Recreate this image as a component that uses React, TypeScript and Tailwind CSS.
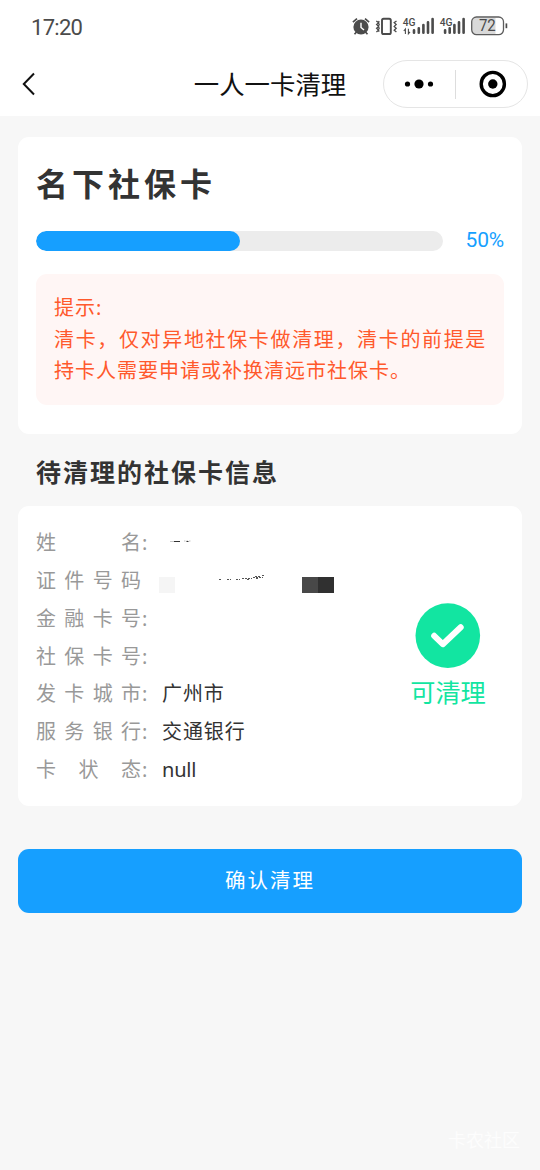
import React from "react";

const cardRows = [
  { label: ["姓", "名"], colon: true, value: "" },
  { label: ["证", "件", "号", "码"], colon: false, value: "" },
  { label: ["金", "融", "卡", "号"], colon: true, value: "" },
  { label: ["社", "保", "卡", "号"], colon: true, value: "" },
  { label: ["发", "卡", "城", "市"], colon: true, value: "广州市" },
  { label: ["服", "务", "银", "行"], colon: true, value: "交通银行" },
  { label: ["卡", "状", "态"], colon: true, value: "null" },
];

function StatusIcons() {
  return (
    <svg width="160" height="24" viewBox="350 14 160 24" fill="none" className="shrink-0">
      {/* alarm clock */}
      <circle cx="361" cy="27" r="7.6" fill="#4b4b4b" />
      <path d="M352.9 22.2 357 18.7M365 18.7l4.1 3.5M356.3 32.3l-1.8 2M365.7 32.3l1.8 2" stroke="#4b4b4b" strokeWidth="1.7" />
      <path d="M361 22.8v4.6l3 2.7" stroke="#fff" strokeWidth="1.4" />
      {/* vibration */}
      <rect x="382" y="18.8" width="8.8" height="15.2" rx="1.6" stroke="#4b4b4b" strokeWidth="1.9" />
      <path d="M376.3 21l2.3 1.6-2 1.9 2 1.9-2 1.9 2 1.9-2.2 1.8M379.2 21l-1 1.6 1 1.9-1 1.9 1 1.9-1 1.9 1 1.4M396.5 21l-2.3 1.6 2 1.9-2 1.9 2 1.9-2 1.9 2.2 1.8" stroke="#4b4b4b" strokeWidth="1.3" />
      {/* first signal */}
      <text x="402.7" y="25.6" fontSize="10.5" fontWeight="500" textLength="12.8" lengthAdjust="spacingAndGlyphs" fill="#4b4b4b" fontFamily="Roboto, sans-serif">4G</text>
      <path d="M405.4 34v-5l-1.6 2M408.4 28.8v5l1.6-2" stroke="#4b4b4b" strokeWidth="1.1" />
      <path d="M414 30.3v2.4M418.8 28.2v4.5M423.4 25v7.7M428 22.2v10.5M432.6 19v13.7" stroke="#4b4b4b" strokeWidth="2.6" strokeLinecap="round" />
      {/* second signal */}
      <text x="439.8" y="25.6" fontSize="10.5" fontWeight="500" textLength="12.8" lengthAdjust="spacingAndGlyphs" fill="#4b4b4b" fontFamily="Roboto, sans-serif">4G</text>
      <path d="M445.1 30.3v2.4M449.7 28.2v4.5M454.4 25v7.7M459 22.2v10.5M463.6 19v13.7" stroke="#4b4b4b" strokeWidth="2.6" strokeLinecap="round" />
      {/* battery */}
      <path d="M476.5 17.8h19v16.4h-19a4.5 4.5 0 0 1-4.5-4.5v-7.4a4.5 4.5 0 0 1 4.5-4.5z" fill="#d9d9d9" />
      <rect x="471.7" y="17" width="31.8" height="17.6" rx="4.8" stroke="#5c5c5c" strokeWidth="1.3" />
      <path d="M506.4 23.4v4.8" stroke="#4b4b4b" strokeWidth="1.7" />
      <text x="487.3" y="31.4" textAnchor="middle" fontSize="16" textLength="16.8" lengthAdjust="spacingAndGlyphs" fill="#4b4b4b" fontFamily="Roboto, sans-serif">72</text>
    </svg>
  );
}

function NameRemnant() {
  return (
    <svg width="30" height="6" viewBox="0 0 30 6" className="-mt-[3px] ml-[7px]">
      <path d="M1 3.5h4" stroke="#bbb" strokeWidth=".8" />
      <path d="M5 3.5h6" stroke="#333" />
      <path d="M15 3h7" stroke="#aaa" strokeWidth=".7" strokeDasharray="1.5 1" />
      <path d="M17.5 3.5h2" stroke="#333" />
    </svg>
  );
}

function IdRemnant() {
  return (
    <svg width="178" height="20" viewBox="158 573 178 20" className="-ml-1 mt-[4px]" shapeRendering="crispEdges">
      <path fill="#f5f5f5" d="M159 577h16v16h-16z" />
      <path fill="#484848" d="M302 577h16v16h-16z" />
      <path fill="#303030" d="M318 577h16v16h-16z" />
      <path d="M219 579.5h3M227 579.5h4M236 579h4M242 578.5h2M245 578.5h7M247 579.5h2M253 577.5h8M255 576.5h5M256 578.5h2M262 577.5h1M262 575.5h3" stroke="#555" strokeWidth="1" strokeDasharray="2 1" />
    </svg>
  );
}

export default function App() {
  return (
    <div className="flex h-[1170px] w-[540px] flex-col overflow-hidden bg-[#f7f7f7] font-['Noto_Sans','Noto_Sans_CJK_SC',sans-serif] text-[#333]">
      <header className="h-[116px] shrink-0 bg-white">
        <div className="flex h-[52px] items-center justify-between pl-[31px] pr-[30px]">
          <span className="pt-[3px] font-['Roboto',sans-serif] text-[22px] leading-[24px] tracking-[-0.7px] text-[#4b4b4b]">17:20</span>
          <StatusIcons />
        </div>
        <div className="grid h-16 grid-cols-[156px_228px_156px] items-center">
          <svg width="20" height="28" viewBox="0 0 20 28" className="ml-[19px]" fill="none">
            <path d="M15 3.5 4.8 14 15 24.5" stroke="#111" strokeWidth="2" />
          </svg>
          <h1 className="pb-[3px] text-center font-['Noto_Sans_CJK_SC',sans-serif] text-[25.4px] leading-[36px] text-[#111]">一人一卡清理</h1>
          <div className="-ml-px flex h-12 w-[145px] items-center rounded-full border border-[#e5e5e5]">
            <svg width="71" height="46" viewBox="0 0 71 46">
              <circle cx="23.5" cy="23" r="2.6" />
              <circle cx="35" cy="23" r="4.6" />
              <circle cx="46.5" cy="23" r="2.6" />
            </svg>
            <div className="h-[29px] w-px bg-[#ddd]" />
            <svg width="71" height="46" viewBox="0 0 71 46" fill="none">
              <circle cx="36.8" cy="23" r="11.6" stroke="#000" strokeWidth="3.4" />
              <circle cx="36.8" cy="23" r="4.7" fill="#000" />
            </svg>
          </div>
        </div>
      </header>

      <main className="flex flex-col px-[18px] pt-[21px]">
        <section className="h-[297px] rounded-[11px] bg-white px-[18px] pt-[21px]">
          <h2 className="h-12 whitespace-nowrap font-['Noto_Sans_CJK_SC',sans-serif] text-[32px] font-bold leading-[48px] tracking-[4px]">名下社保卡</h2>
          <div className="mt-[23px] flex h-6 items-center">
            <div className="h-[19.5px] w-[407px] overflow-hidden rounded-full bg-[#ececec]">
              <div className="h-full w-1/2 rounded-full bg-[#169fff]" />
            </div>
            <span className="ml-auto pb-[2px] font-['Roboto',sans-serif] text-[21px] leading-6 tracking-[-0.2px] text-[#169fff]">50%</span>
          </div>
          <div className="mt-[21px] h-[131px] rounded-[11px] bg-[#fff6f5] px-[18px] pt-[18px] text-[20px] leading-[31.5px] text-[#ff592c]">
            <p className="tracking-[1px]">提示:</p>
            <p className="whitespace-nowrap tracking-[1.65px]">清卡，仅对异地社保卡做清理，清卡的前提是</p>
            <p className="whitespace-nowrap tracking-[1px]">持卡人需要申请或补换清远市社保卡。</p>
          </div>
        </section>

        <h3 className="h-[72px] pl-[18px] font-['Noto_Sans_CJK_SC',sans-serif] text-[25px] font-bold leading-[74px] tracking-[2px]">待清理的社保卡信息</h3>

        <section className="flex h-[300px] rounded-[11px] bg-white pl-[18px] pt-[18px]">
          <div className="grow">
            {cardRows.map((row, i) => (
              <div key={i} className="flex h-[37.75px] items-center text-[20px] leading-[37px]">
                <div className="flex w-[105px] justify-between text-[#999]">
                  {row.label.map((c) => (
                    <span key={c}>{c}</span>
                  ))}
                </div>
                <span className="w-[21px] pl-[1px] text-[#999]">{row.colon ? ":" : ""}</span>
                {i === 0 && <NameRemnant />}
                {i === 1 && <IdRemnant />}
                <span className={row.value === "null" ? "tracking-[-0.2px]" : "tracking-[0.9px]"}>{row.value}</span>
              </div>
            ))}
          </div>
          <div className="flex w-[148px] flex-col items-center pt-[79px]">
            <svg width="66" height="66" viewBox="0 0 66 66" fill="none">
              <circle cx="32.8" cy="32.6" r="32.3" fill="#12e5a1" />
              <path d="M19.2 32.8 27.8 41.2 45.7 24.2" stroke="#fff" strokeWidth="6" strokeLinecap="round" strokeLinejoin="round" />
            </svg>
            <span className="mt-[4px] font-['Noto_Sans_CJK_SC',sans-serif] text-[25.2px] leading-[36px] text-[#12e5a1]">可清理</span>
          </div>
        </section>

        <button className="mt-[43px] h-[64px] rounded-[11px] bg-[#169fff] pb-[2px] text-[20.5px] leading-[62px] tracking-[2px] text-white">确认清理</button>
      </main>

      <footer className="mt-auto flex justify-end pb-[17px] pr-[20px] text-[18px] leading-[26px] text-[#fdfdfd]">卡农社区</footer>
    </div>
  );
}
